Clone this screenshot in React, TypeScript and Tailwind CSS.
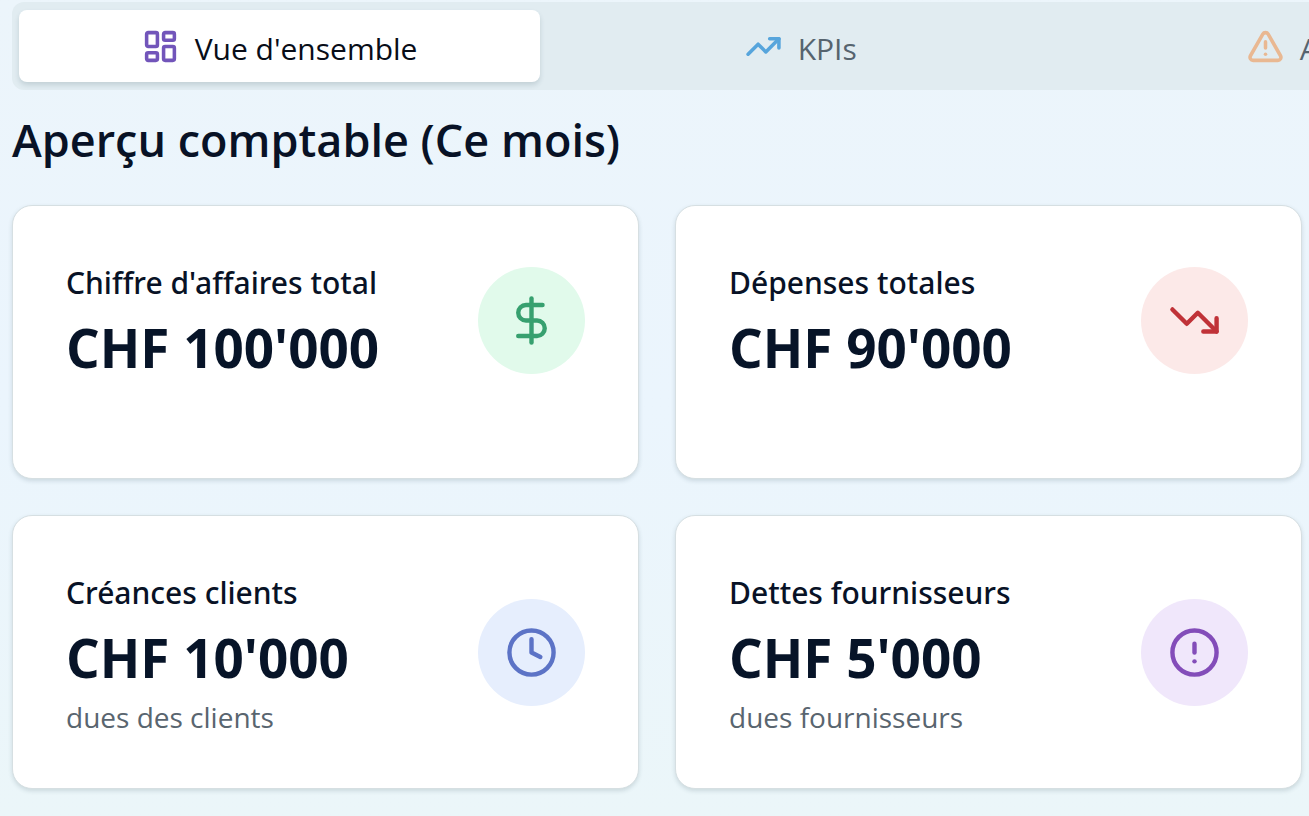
import { useState } from "react";
import type { LucideIcon } from "lucide-react";
import {
  CircleAlert,
  Clock,
  DollarSign,
  LayoutDashboard,
  TrendingDown,
  TrendingUp,
  TriangleAlert,
} from "lucide-react";
import { clsx } from "clsx";

type Tab = { id: string; label: string; icon: LucideIcon; color: string };

type Stat = {
  title: string;
  value: string;
  note?: string;
  icon: LucideIcon;
  color: string;
};

const tabs: Tab[] = [
  { id: "overview", label: "Vue d'ensemble", icon: LayoutDashboard, color: "text-[#7255ba]" },
  { id: "kpis", label: "KPIs", icon: TrendingUp, color: "text-[#57a5dc]" },
  { id: "alerts", label: "Alertes", icon: TriangleAlert, color: "text-[#e9b892]" },
];

const stats: Stat[] = [
  {
    title: "Chiffre d'affaires total",
    value: "CHF 100'000",
    icon: DollarSign,
    color: "bg-[#e1faeb] text-[#37a06f]",
  },
  {
    title: "Dépenses totales",
    value: "CHF 90'000",
    icon: TrendingDown,
    color: "bg-[#fce9e8] text-[#c03238]",
  },
  {
    title: "Créances clients",
    value: "CHF 10'000",
    note: "dues des clients",
    icon: Clock,
    color: "bg-[#e6eefd] text-[#5c73c6]",
  },
  {
    title: "Dettes fournisseurs",
    value: "CHF 5'000",
    note: "dues fournisseurs",
    icon: CircleAlert,
    color: "bg-[#f0e7fb] text-[#834db9]",
  },
];

const StatCard = ({ stat }: { stat: Stat }) => {
  const Icon = stat.icon;

  return (
    <article className="min-h-[274px] rounded-[20px] border border-[#d6dfe2] bg-white p-[53px] shadow-[0_2px_4px_rgba(40,70,80,0.16)]">
      <div className="flex items-center justify-between">
        <div>
          <h3 className="font-['Noto_Sans','Open_Sans',sans-serif] text-[30px] leading-[48px] font-medium text-[#081226]">
            {stat.title}
          </h3>
          <p className="mt-2 text-[53px] leading-[66px] font-bold text-[#071428]">
            {stat.value}
          </p>
          {stat.note && (
            <p className="mt-2 text-[28px] leading-[36px] text-[#59656f]">{stat.note}</p>
          )}
        </div>
        <div className={clsx("shrink-0 rounded-full p-[27px]", stat.color)}>
          <Icon className="size-[53px]" />
        </div>
      </div>
    </article>
  );
};

const App = () => {
  const [activeTab, setActiveTab] = useState("overview");

  return (
    <main className="min-h-screen overflow-hidden bg-linear-to-b from-[#ecf5fb] via-[#ebf5fd] to-[#ebf6f9] pt-[2px] pb-6 pl-3 font-['Open_Sans','Noto_Sans',sans-serif]">
      {/* Tabs run past the right edge */}
      <div
        role="tablist"
        className="grid auto-cols-[40.4%] grid-flow-col rounded-l-xl bg-[#e1ecf1] py-2 pl-[7px]"
      >
        {tabs.map(({ id, label, icon: Icon, color }) => (
          <button
            key={id}
            type="button"
            role="tab"
            aria-selected={activeTab === id}
            onClick={() => setActiveTab(id)}
            className={clsx(
              "flex h-[72px] items-center justify-center gap-4 rounded-lg text-[30px]",
              activeTab === id
                ? "bg-white text-[#080d18] shadow-[0_3px_5px_rgba(40,70,80,0.16)]"
                : "text-[#56646f]",
            )}
          >
            <Icon strokeWidth={2.3} className={clsx("size-[37px] shrink-0", color)} />
            <span className="pt-1">{label}</span>
          </button>
        ))}
      </div>

      <section className="pr-[7px]">
        <h2 className="pt-4 pb-8 text-[45px] leading-[67px] font-semibold text-[#081226]">
          Aperçu comptable (Ce mois)
        </h2>
        <div className="grid grid-cols-2 gap-9">
          {stats.map((stat) => (
            <StatCard key={stat.title} stat={stat} />
          ))}
        </div>
      </section>
    </main>
  );
};

export default App;
